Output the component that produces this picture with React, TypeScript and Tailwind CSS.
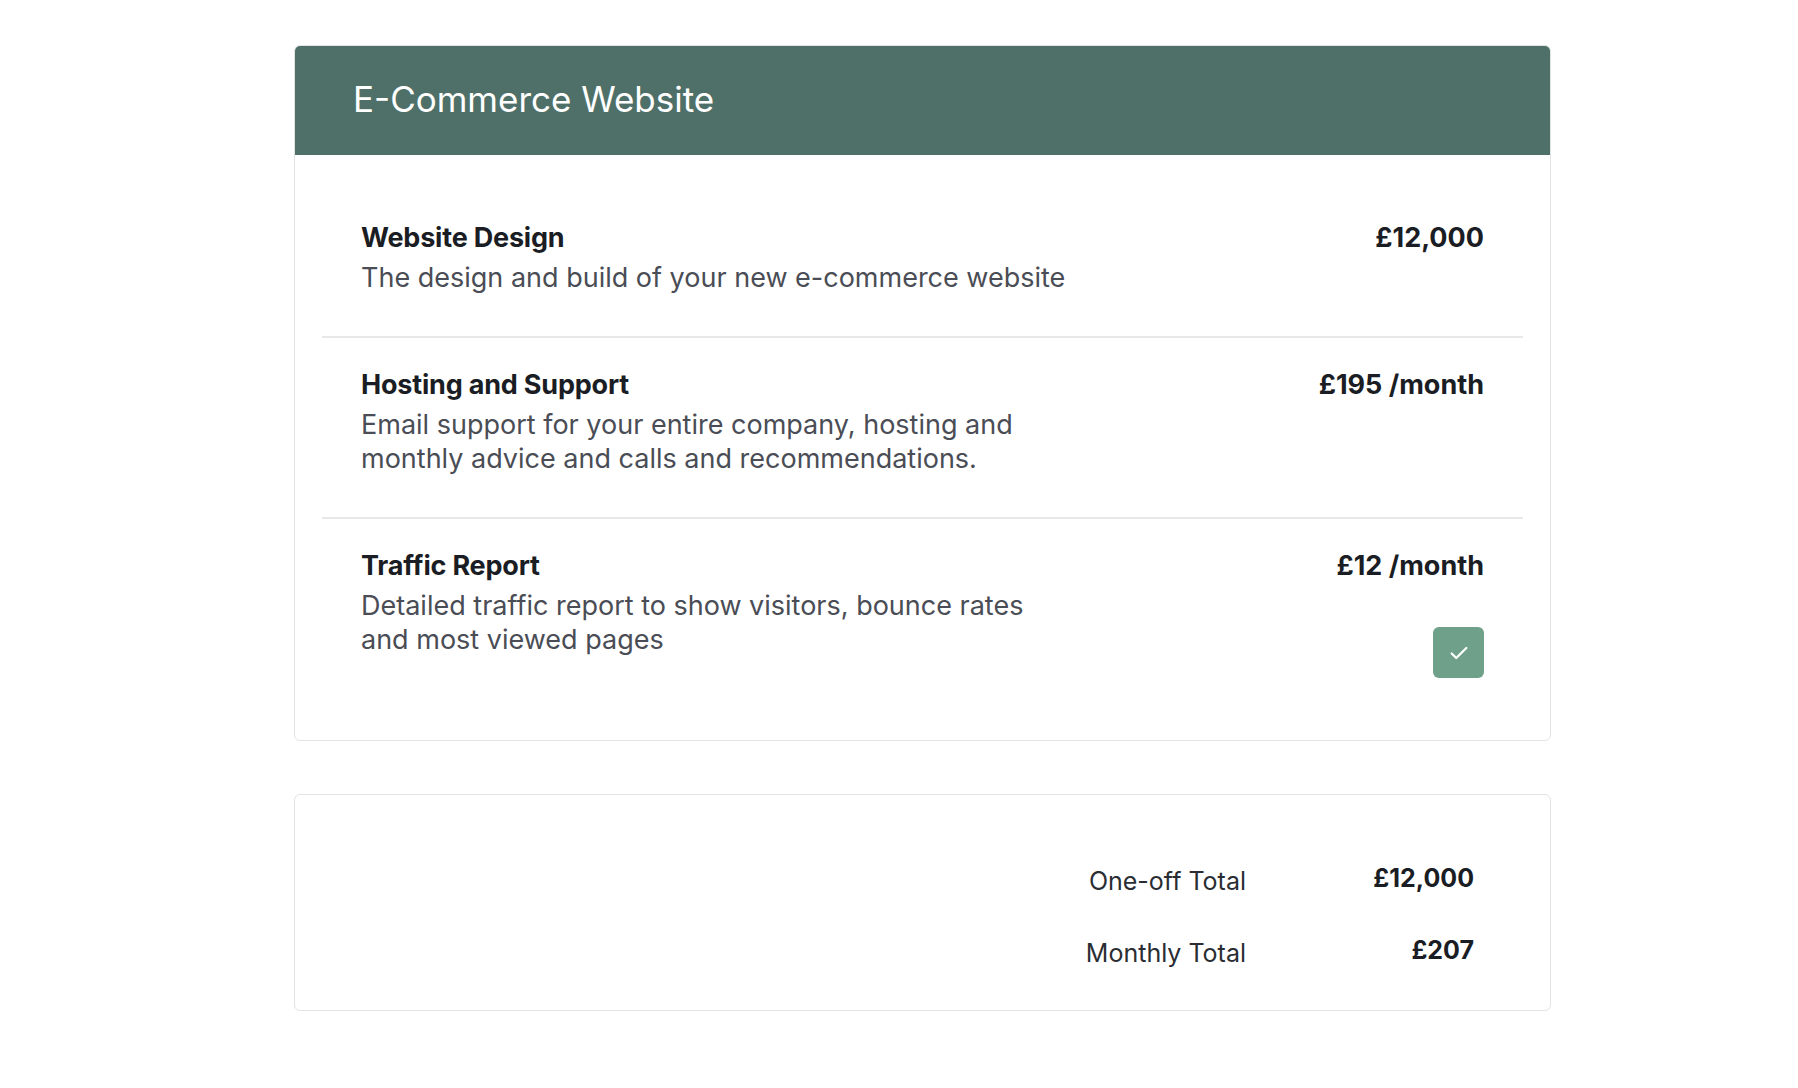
export default function App() {
  const items = [
    { t: "Website Design", d: ["The design and build of your new e-commerce website"], p: "£12,000" },
    { t: "Hosting and Support", d: ["Email support for your entire company, hosting and", "monthly advice and calls and recommendations."], p: "£195 /month" },
    { t: "Traffic Report", d: ["Detailed traffic report to show visitors, bounce rates", "and most viewed pages"], p: "£12 /month", check: true },
  ];
  return (
    <div className="min-h-screen bg-white pt-[45px] pl-[294px]" style={{ fontFamily: "Inter, 'Noto Sans', sans-serif" }}>
      <div className="w-[1257px] rounded-[6px] border border-[#e3e3e3] overflow-hidden">
        <div className="h-[109px] bg-[#4f7068] flex items-center pl-[58px] text-white text-[35px] pb-[2px]">E-Commerce Website</div>
        <div className="px-[27px] pt-[36px] pb-[21px]">
          {items.map((it, i) => (
            <div key={i} className={`flex justify-between px-[39px] pt-[30px] pb-[41px] ${i < 2 ? "border-b-2 border-[#e8e8e8]" : ""}`}>
              <div>
                <div className="text-[27px] font-bold text-[#1a1d23] leading-[34px] tracking-[-0.2px]">{it.t}</div>
                <div className="mt-[6px] text-[27px] text-[#4a4d55] leading-[34px]">
                  {it.d.map((l, j) => <div key={j}>{l}</div>)}
                </div>
              </div>
              <div className="flex flex-col items-end">
                <div className="text-[27px] font-bold text-[#1a1d23] leading-[34px]">{it.p}</div>
                {it.check && (
                  <div className="mt-[44px] w-[51px] h-[51px] rounded-[6px] bg-[#6fa08a] flex items-center justify-center">
                    <svg width="22" height="22" viewBox="0 0 24 24" fill="none" stroke="white" strokeWidth="2.5" strokeLinecap="round" strokeLinejoin="round"><path d="M4 12.5l5 5L20 6.5" /></svg>
                  </div>
                )}
              </div>
            </div>
          ))}
        </div>
      </div>
      <div className="mt-[53px] w-[1257px] h-[217px] rounded-[6px] border border-[#e3e3e3] flex justify-end items-start pr-[76px] pt-[62px]">
        <div className="grid grid-cols-[auto_190px] gap-x-[38px] gap-y-[30px] items-center">
          <div className="text-right text-[25px] text-[#2a2d33] leading-[36px] pt-[6px]">One-off Total</div>
          <div className="text-right text-[25px] font-bold text-[#1a1d23] leading-[36px]">£12,000</div>
          <div className="text-right text-[25px] text-[#2a2d33] leading-[36px] pt-[6px]">Monthly Total</div>
          <div className="text-right text-[25px] font-bold text-[#1a1d23] leading-[36px]">£207</div>
        </div>
      </div>
    </div>
  );
}
